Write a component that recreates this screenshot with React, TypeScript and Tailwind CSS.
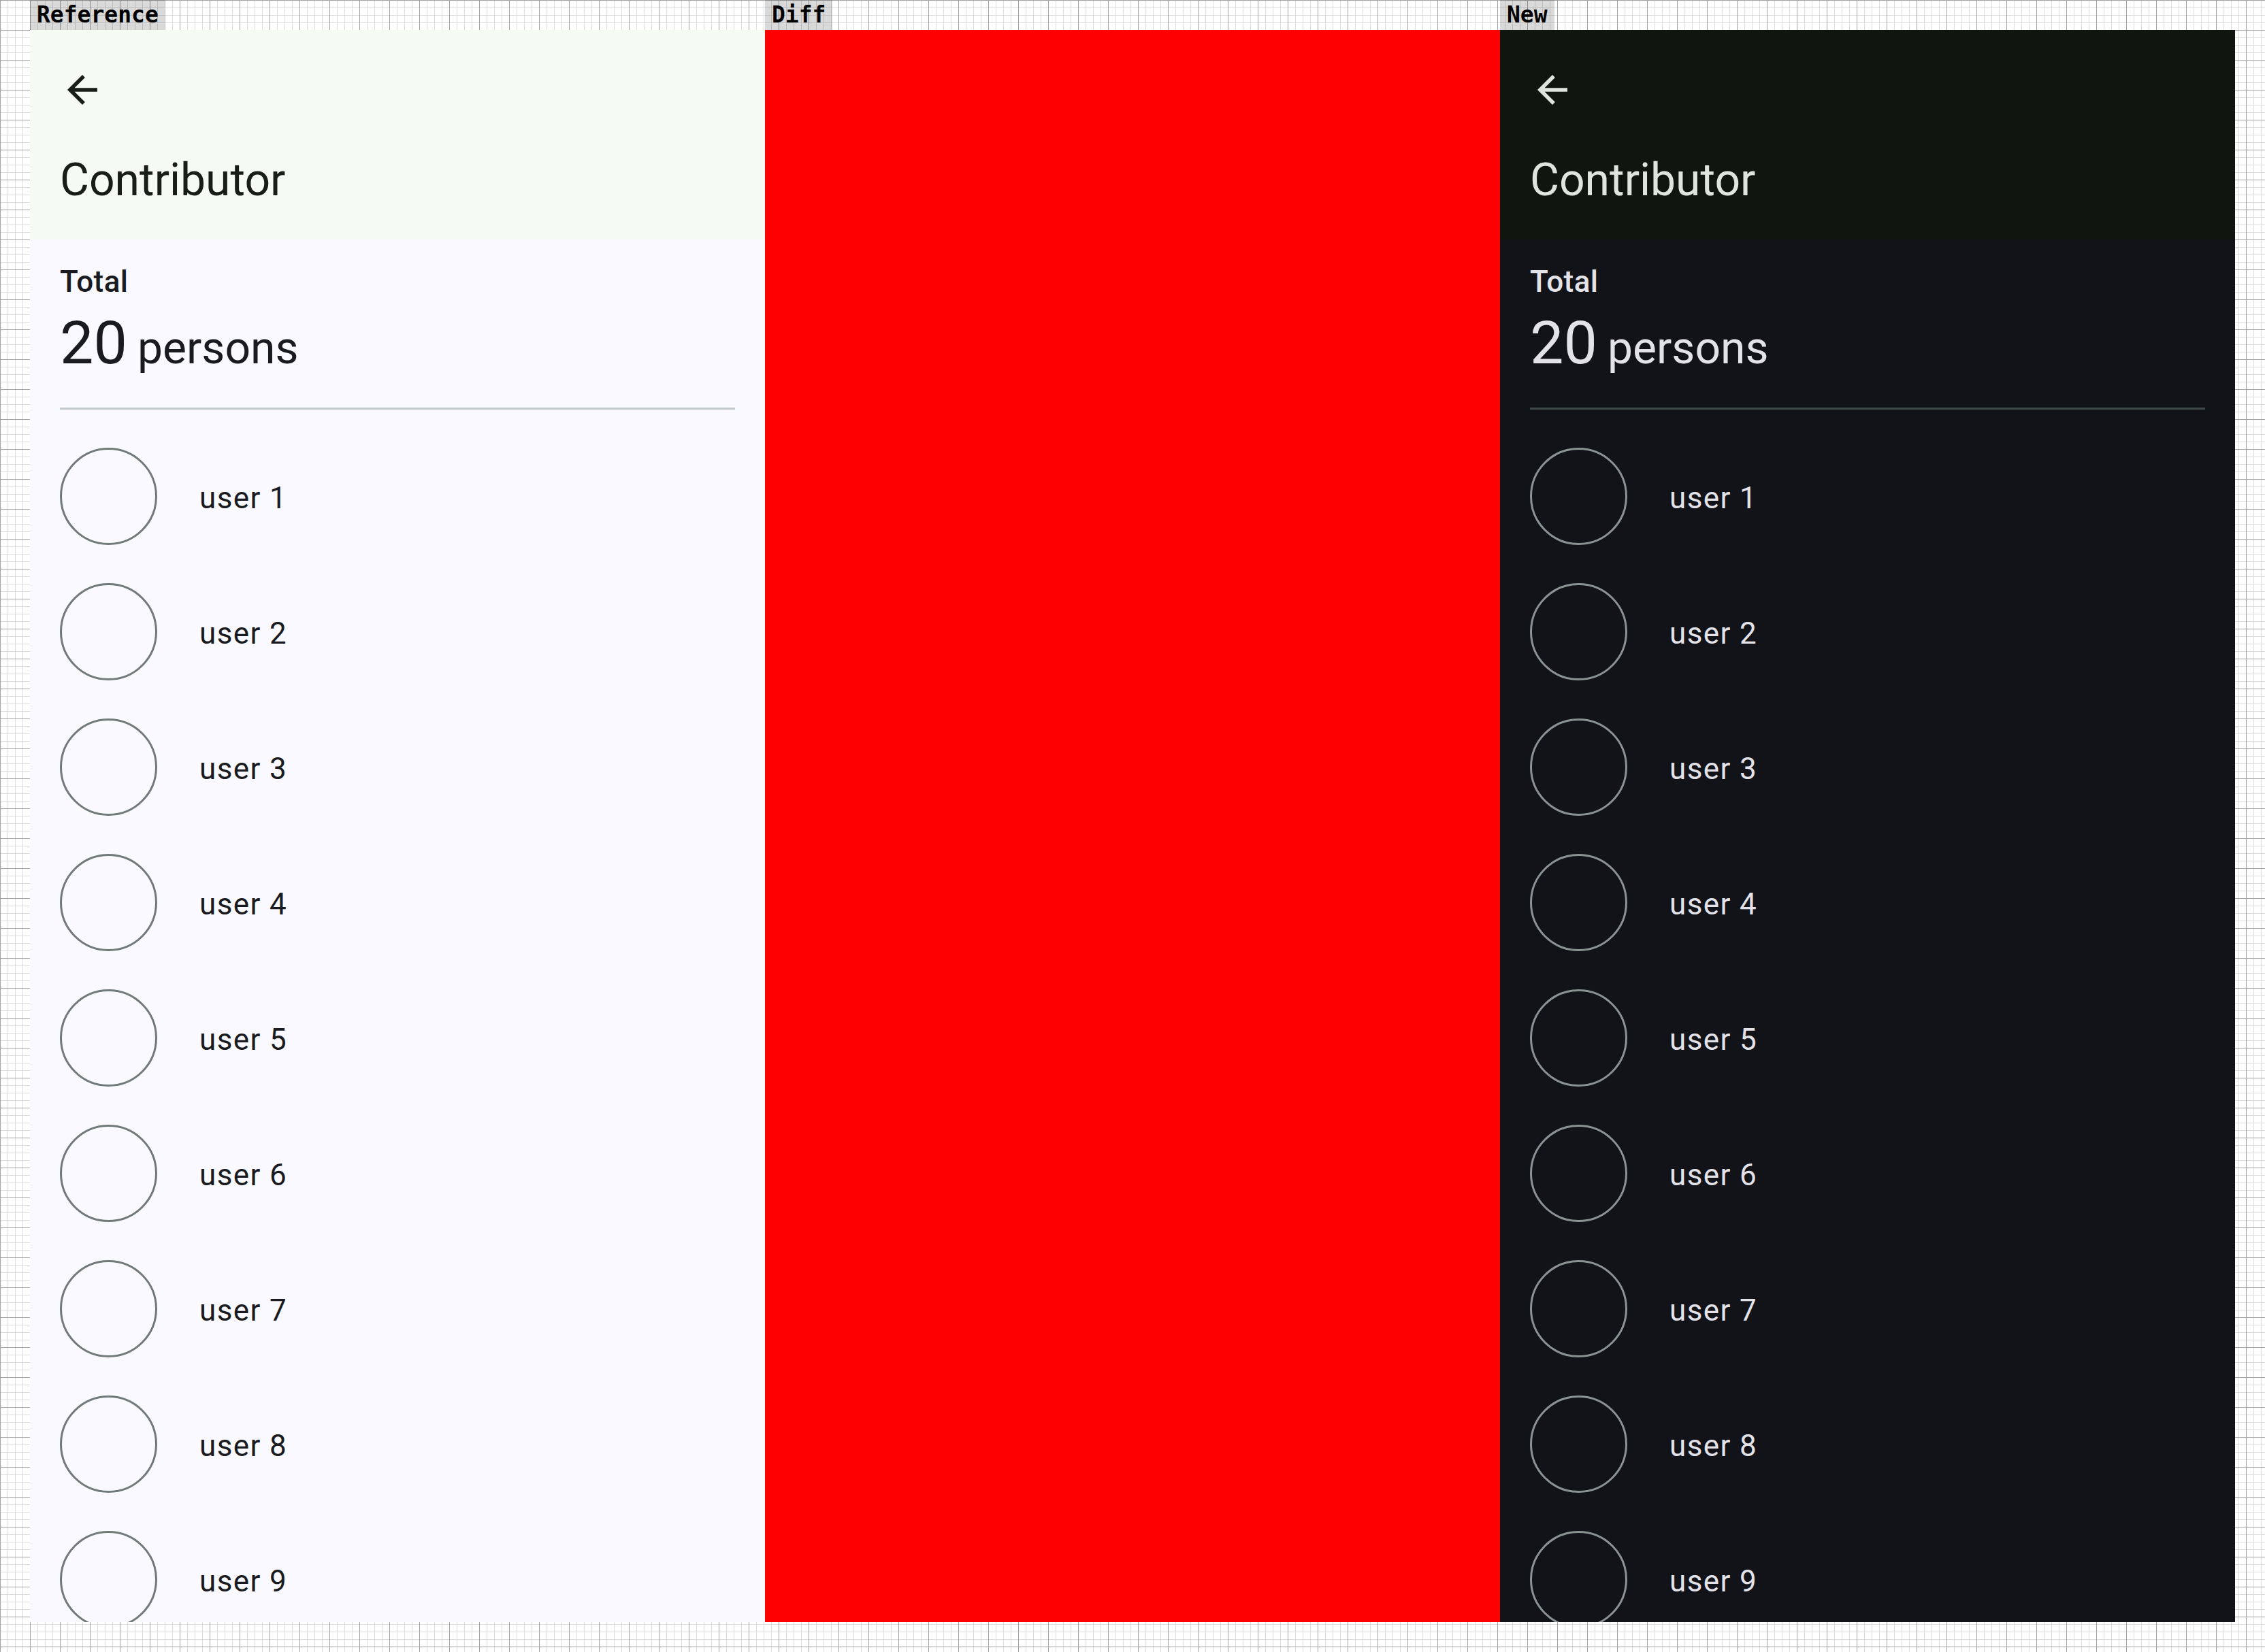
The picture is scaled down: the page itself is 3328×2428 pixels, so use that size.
const users = Array.from({ length: 9 }, (_, i) => `user ${i + 1}`);

function ArrowBack() {
  return (
    <svg width="66" height="66" viewBox="0 0 24 24" fill="currentColor">
      <path d="M20 11H7.83l5.59-5.59L12 4l-8 8 8 8 1.41-1.41L7.83 13H20v-2z" />
    </svg>
  );
}

function Screen({ dark }: { dark?: boolean }) {
  return (
    <div
      className={`flex h-[2340px] w-[1080px] flex-col overflow-hidden font-['Roboto',sans-serif] ${
        dark ? "bg-[#121318] text-[#e3e2e9]" : "bg-[#f9f9ff] text-[#1a1b20]"
      }`}
    >
      {/* Medium top app bar */}
      <div className={`h-[308px] shrink-0 ${dark ? "bg-[#101510] text-[#dfe4dc]" : "bg-[#f5fbf3] text-[#171d17]"}`}>
        <div className="flex h-[176px] items-center pl-[11px]">
          <div className="flex h-[132px] w-[132px] items-center justify-center">
            <ArrowBack />
          </div>
        </div>
        <div className="mt-[1px] pl-[44px] text-[66px] leading-[88px]">Contributor</div>
      </div>

      <div className="px-[44px]">
        <p className="mt-[29px] text-[44px] font-medium leading-[66px] tracking-[0.4px]">Total</p>
        <div className="flex items-baseline pt-[2px]">
          <span className="text-[88px] leading-[110px]">20</span>
          <span className="ml-[15px] text-[66px] leading-[88px]">persons</span>
        </div>
        <div className={`mt-[40px] h-[3px] ${dark ? "bg-[#3f4948]" : "bg-[#c0c8c8]"}`} />

        <ul className="mt-[56px] flex flex-col gap-[56px]">
          {users.map((name) => (
            <li key={name} className="flex items-center">
              <div
                className={`h-[143px] w-[143px] shrink-0 rounded-full border-[3px] ${
                  dark ? "border-[#8a9392]" : "border-[#717a79]"
                }`}
              />
              <span className="ml-[62px] pt-[4px] text-[44px] leading-[66px] tracking-[1.4px]">{name}</span>
            </li>
          ))}
        </ul>
      </div>
    </div>
  );
}

function Column({ label, children }: { label: string; children: React.ReactNode }) {
  return (
    <div className="flex w-[1080px] flex-col">
      <div className="flex h-[44px]">
        <span className="bg-black/15 px-[10px] font-['DejaVu_Sans_Mono',monospace] text-[33px] font-bold leading-[44px] text-black">
          {label}
        </span>
      </div>
      {children}
    </div>
  );
}

export default function App() {
  return (
    <div className="h-[2428px] w-[3328px] bg-white [background-image:linear-gradient(to_right,#a2a2a2_1px,transparent_1px),linear-gradient(to_bottom,#a2a2a2_1px,transparent_1px),linear-gradient(to_right,#dddddd_1px,transparent_1px),linear-gradient(to_bottom,#dddddd_1px,transparent_1px)] [background-size:44px_44px,44px_44px,11px_11px,11px_11px]">
      <div className="flex pl-[44px]">
        <Column label="Reference">
          <Screen />
        </Column>
        <Column label="Diff">
          <div className="h-[2340px] w-[1080px] bg-[#ff0000]" />
        </Column>
        <Column label="New">
          <Screen dark />
        </Column>
      </div>
    </div>
  );
}
